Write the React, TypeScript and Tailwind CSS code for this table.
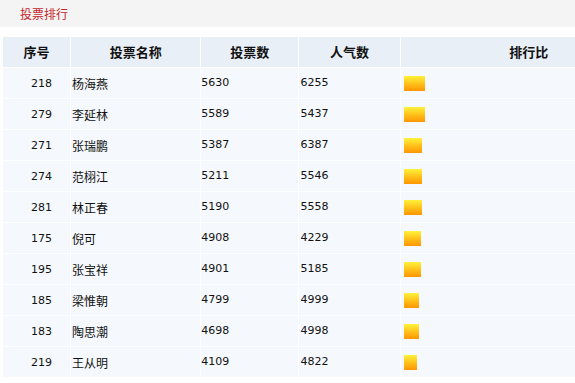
const rows = [
  { id: 218, name: "杨海燕", votes: 5630, pop: 6255, bar: 21 },
  { id: 279, name: "李延林", votes: 5589, pop: 5437, bar: 21 },
  { id: 271, name: "张瑞鹏", votes: 5387, pop: 6387, bar: 18 },
  { id: 274, name: "范栩江", votes: 5211, pop: 5546, bar: 18 },
  { id: 281, name: "林正春", votes: 5190, pop: 5558, bar: 18 },
  { id: 175, name: "倪可", votes: 4908, pop: 4229, bar: 17 },
  { id: 195, name: "张宝祥", votes: 4901, pop: 5185, bar: 17 },
  { id: 185, name: "梁惟朝", votes: 4799, pop: 4999, bar: 15 },
  { id: 183, name: "陶思潮", votes: 4698, pop: 4998, bar: 15 },
  { id: 219, name: "王从明", votes: 4109, pop: 4822, bar: 13 },
];

const cjk = "font-['Noto_Sans_CJK_SC',sans-serif]";
const num = "font-['DejaVu_Sans','Noto_Sans_CJK_SC',sans-serif]";

export default function App() {
  return (
    <div className="w-[575px] h-[383px] overflow-hidden bg-white">
      <div className="h-[27px] bg-[#f4f4f4] flex items-center pl-[20px]">
        <span className={`${cjk} text-[12px] leading-none text-[#c4262b]`}>投票排行</span>
      </div>
      <div className="pt-[9px] pl-[2px]">
        <table className="border-separate border-spacing-[1px] w-[656px] table-fixed">
          <colgroup>
            <col className="w-[67px]" />
            <col className="w-[129px]" />
            <col className="w-[97px]" />
            <col className="w-[100px]" />
            <col className="w-[256px]" />
          </colgroup>
          <thead>
            <tr className={`h-[30px] bg-[#e9eff7] ${cjk} text-[13px] font-bold text-[#111]`}>
              <th className="text-center">序号</th>
              <th className="text-center">投票名称</th>
              <th className="text-center">投票数</th>
              <th className="text-center">人气数</th>
              <th className="text-center">排行比</th>
            </tr>
          </thead>
          <tbody>
            {rows.map((r) => (
              <tr key={r.id} className="h-[30px] bg-[#f5f8fc] text-[#111]">
                <td className={`${num} text-[11px] text-center pl-[10px] pt-[3px]`}>{r.id}</td>
                <td className={`${cjk} text-[12px] pl-[1px] pt-[1px]`}>{r.name}</td>
                <td className={`${num} text-[11px] pt-[1px]`}>{r.votes}</td>
                <td className={`${num} text-[11px] pl-[1px] pt-[1px]`}>{r.pop}</td>
                <td className="pl-[3px]">
                  <div
                    className="h-[15px] bg-gradient-to-b from-[#fff23a] via-[#ffc21a] to-[#ff9400]"
                    style={{ width: r.bar }}
                  />
                </td>
              </tr>
            ))}
          </tbody>
        </table>
      </div>
    </div>
  );
}
